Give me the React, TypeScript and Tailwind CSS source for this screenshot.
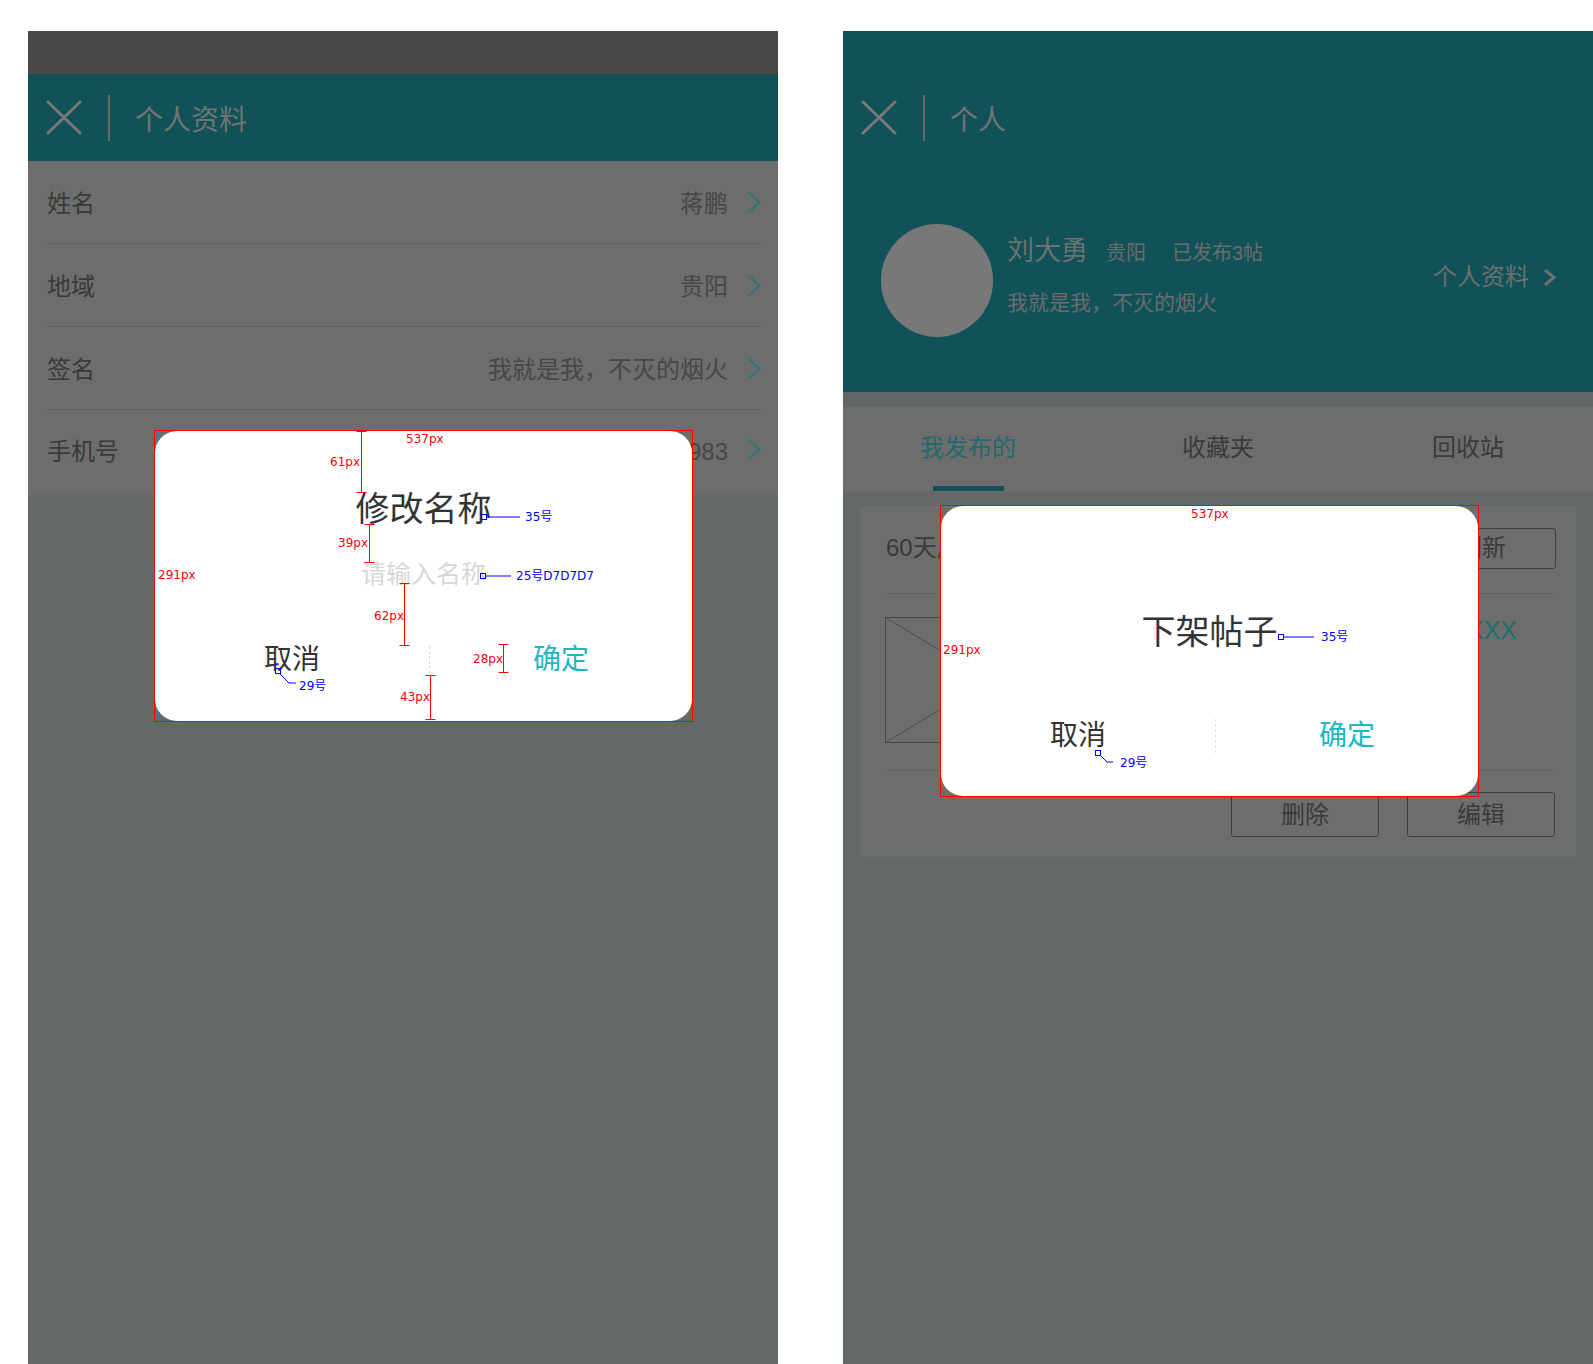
import React from "react";

function XIcon() {
  return (
    <svg width="36" height="35" viewBox="0 0 36 35" className="shrink-0">
      <path d="M2 2 L34 33 M34 2 L2 33" stroke="#787878" strokeWidth="3" strokeLinecap="round" fill="none" />
    </svg>
  );
}

function Header({ title }: { title: string }) {
  return (
    <div className="h-[87px] flex items-center">
      <div className="ml-[18px] flex">
        <XIcon />
      </div>
      <div className="ml-[26px] w-[2px] h-[46px] bg-[#676767]" />
      <div className="ml-[25px] pt-[6px] text-[28px] leading-[36px] text-[#737373]">{title}</div>
    </div>
  );
}

function TealChevron() {
  return (
    <svg width="14" height="23" viewBox="0 0 14 23" className="shrink-0">
      <polyline points="1.5,1.5 12.5,11.5 1.5,21.5" stroke="#2a7876" strokeWidth="2" fill="none" />
    </svg>
  );
}

function Row({ label, value, last }: { label: string; value: string; last?: boolean }) {
  return (
    <div className={last ? "h-[85px] flex items-center pl-[2px] pb-[6px]" : "h-[83px] flex items-center pl-[2px] border-b border-[#626262]"}>
      <div className="pt-[4px] text-[24px] leading-[32px] text-[#3a3a3a]">{label}</div>
      <div className="flex-1" />
      <div className="pt-[4px] text-[24px] leading-[32px] text-[#474747] mr-[19px]">{value}</div>
      <TealChevron />
    </div>
  );
}

function AnnoLabel({ children, className }: { children: React.ReactNode; className: string }) {
  return (
    <span className={"absolute whitespace-nowrap text-[12px] leading-[14px] [font-family:'DejaVu_Sans','Noto_Sans_CJK_SC',sans-serif] " + className}>
      {children}
    </span>
  );
}

function LeftDialog() {
  return (
    <div className="absolute left-[127px] top-[400px] w-[537px] h-[290px]">
      <div className="absolute inset-0 bg-white rounded-[22px] flex flex-col items-center">
        <div className="mt-[58px] h-[40px] text-[34px] leading-[40px] text-[#333333]">修改名称</div>
        <div className="mt-[30px] h-[30px] text-[25px] leading-[30px] text-[#d7d7d7]">请输入名称</div>
        <div className="mt-[51px] h-[40px] w-full flex items-center">
          <div className="w-[274px] text-center text-[28px] leading-[40px] text-[#333333]">取消</div>
          <div className="h-[28px] border-l border-dashed border-[#d9d9d9]" />
          <div className="flex-1 text-center text-[28px] leading-[40px] text-[#1eb6c3]">确定</div>
        </div>
      </div>
      <svg className="absolute left-0 top-0 overflow-visible pointer-events-none" width="537" height="290" viewBox="0 0 537 290">
        <rect x="-0.5" y="-0.5" width="538" height="291" stroke="#ff0000" strokeWidth="1" fill="none" />
        <g stroke="#ff0000" strokeWidth="1" fill="none">
          <path d="M206.5 0 V62 M201.5 0.5 H211.5 M201.5 61.5 H211.5" />
          <path d="M214.5 93 V132 M209.5 93.5 H219.5 M209.5 131.5 H219.5" />
          <path d="M249.5 152 V215 M244.5 152.5 H254.5 M244.5 214.5 H254.5" />
          <path d="M275.5 244 V289 M270.5 244.5 H280.5 M270.5 288.5 H280.5" />
          <path d="M348.5 213 V242 M343.5 213.5 H353.5 M343.5 241.5 H353.5" />
        </g>
        <g stroke="#0000ff" strokeWidth="1" fill="none">
          <rect x="326.5" y="83.5" width="5" height="5" />
          <path d="M331.5 86 H365" />
          <rect x="325.5" y="142.5" width="5" height="5" />
          <path d="M330.5 145 H356" />
          <rect x="120.5" y="237.5" width="5" height="5" />
          <path d="M124 242 L134 252 H141" />
        </g>
      </svg>
      <AnnoLabel className="left-[251px] top-[1px] text-[#ff0000]">537px</AnnoLabel>
      <AnnoLabel className="right-[332px] top-[24px] text-[#ff0000]">61px</AnnoLabel>
      <AnnoLabel className="right-[324px] top-[105px] text-[#ff0000]">39px</AnnoLabel>
      <AnnoLabel className="right-[288px] top-[178px] text-[#ff0000]">62px</AnnoLabel>
      <AnnoLabel className="right-[262px] top-[259px] text-[#ff0000]">43px</AnnoLabel>
      <AnnoLabel className="right-[189px] top-[221px] text-[#ff0000]">28px</AnnoLabel>
      <AnnoLabel className="left-[3px] top-[137px] text-[#ff0000]">291px</AnnoLabel>
      <AnnoLabel className="left-[370px] top-[79px] text-[#0000ff]">35号</AnnoLabel>
      <AnnoLabel className="left-[361px] top-[138px] text-[#0000ff]">25号D7D7D7</AnnoLabel>
      <AnnoLabel className="left-[144px] top-[248px] text-[#0000ff]">29号</AnnoLabel>
    </div>
  );
}

function RightDialog() {
  return (
    <div className="absolute left-[98px] top-[475px] w-[537px] h-[290px]">
      <div className="absolute inset-0 bg-white rounded-[22px] flex flex-col items-center">
        <div className="mt-[106px] h-[40px] text-[34px] leading-[40px] text-[#333333]">下架帖子</div>
        <div className="mt-[64px] h-[40px] w-full flex items-center">
          <div className="w-[274px] text-center text-[28px] leading-[40px] text-[#333333]">取消</div>
          <div className="h-[34px] border-l border-dashed border-[#e2e2e2]" />
          <div className="flex-1 text-center text-[28px] leading-[40px] text-[#1eb6c3]">确定</div>
        </div>
      </div>
      <svg className="absolute left-0 top-0 overflow-visible pointer-events-none" width="537" height="290" viewBox="0 0 537 290">
        <rect x="-0.5" y="-0.5" width="538" height="291" stroke="#ff0000" strokeWidth="1" fill="none" />
        <g stroke="#0000ff" strokeWidth="1" fill="none">
          <rect x="337.5" y="128.5" width="5" height="5" />
          <path d="M342.5 131 H373" />
          <rect x="154.5" y="244.5" width="5" height="5" />
          <path d="M159 249 L166 256 H172" />
        </g>
      </svg>
      <AnnoLabel className="left-[250px] top-[1px] text-[#ff0000]">537px</AnnoLabel>
      <AnnoLabel className="left-[2px] top-[137px] text-[#ff0000]">291px</AnnoLabel>
      <AnnoLabel className="left-[380px] top-[124px] text-[#0000ff]">35号</AnnoLabel>
      <AnnoLabel className="left-[179px] top-[250px] text-[#0000ff]">29号</AnnoLabel>
    </div>
  );
}

function LeftPanel() {
  return (
    <div className="relative w-[750px] h-[1333px] flex flex-col bg-[#646868] shrink-0">
      <div className="h-[43px] bg-[#484848]" />
      <div className="bg-[#115259]">
        <Header title="个人资料" />
      </div>
      <div className="bg-[#6d6d6d] px-[17px]">
        <Row label="姓名" value="蒋鹏" />
        <Row label="地域" value="贵阳" />
        <Row label="签名" value="我就是我，不灭的烟火" />
        <Row label="手机号" value="13885016983" last />
      </div>
      <div className="flex-1" />
      <LeftDialog />
    </div>
  );
}

function OutlineButton({ label, h }: { label: string; h: string }) {
  return (
    <div className={"w-[148px] border border-[#3d3d3d] rounded-[3px] flex items-center justify-center text-[24px] leading-[32px] text-[#3a3a3a] " + h}>
      {label}
    </div>
  );
}

function RightPanel() {
  return (
    <div className="relative w-[750px] h-[1333px] flex flex-col bg-[#646868] shrink-0">
      <div className="h-[361px] bg-[#115259] pt-[43px]">
        <Header title="个人" />
        <div className="mt-[63px] flex items-start">
          <div className="ml-[38px] w-[112px] h-[113px] rounded-full bg-[#787878]" />
          <div className="ml-[14px] mt-[9px] flex flex-col">
            <div className="flex items-baseline h-[36px]">
              <span className="text-[27px] leading-[36px] text-[#707070]">刘大勇</span>
              <span className="ml-[18px] text-[20px] leading-[28px] text-[#6c6c6c]">贵阳</span>
              <span className="ml-[26px] text-[20px] leading-[28px] text-[#6c6c6c]">已发布3帖</span>
            </div>
            <div className="mt-[20px] text-[21px] leading-[28px] text-[#6c6c6c]">我就是我，不灭的烟火</div>
          </div>
          <div className="ml-auto mr-[37px] mt-[41px] flex items-center">
            <span className="text-[24px] leading-[24px] text-[#6e6e6e]">个人资料</span>
            <svg width="13" height="19" viewBox="0 0 13 19" className="ml-[14px]">
              <polyline points="2,2 11,9.5 2,17" stroke="#707070" strokeWidth="3" fill="none" />
            </svg>
          </div>
        </div>
      </div>
      <div className="h-[15px] bg-[#616565]" />
      <div className="h-[85px] bg-[#6d6d6d] grid grid-cols-3">
        <div className="flex flex-col items-center pt-[25px]">
          <div className="h-[32px] text-[24px] leading-[32px] text-[#1e6a6e]">我发布的</div>
          <div className="mt-[22px] w-[71px] h-[5px] bg-[#11525a]" />
        </div>
        <div className="flex flex-col items-center pt-[25px]">
          <div className="h-[32px] text-[24px] leading-[32px] text-[#3a3a3a]">收藏夹</div>
        </div>
        <div className="flex flex-col items-center pt-[25px]">
          <div className="h-[32px] text-[24px] leading-[32px] text-[#3a3a3a]">回收站</div>
        </div>
      </div>
      <div className="px-[17px] pt-[14px]">
        <div className="h-[351px] bg-[#6d6d6d] pl-[25px] pr-[21px] flex flex-col">
          <div className="h-[88px] shrink-0 flex items-center border-b border-[#626262] pb-[3px]">
            <div className="ml-[1px] text-[24px] leading-[32px] text-[#3a3a3a]">60天后自动下架</div>
            <div className="ml-auto mr-[-1px]">
              <OutlineButton label="刷新" h="h-[41px]" />
            </div>
          </div>
          <div className="h-[177px] shrink-0 flex items-start border-b border-[#626262]">
            <svg width="208" height="126" viewBox="0 0 208 126" className="mt-[23px] shrink-0">
              <rect x="0.5" y="0.5" width="207" height="125" stroke="#474747" strokeWidth="1" fill="none" />
              <path d="M0.5 0.5 L207.5 125.5 M0.5 125.5 L207.5 0.5" stroke="#4d4d4d" strokeWidth="1" fill="none" />
            </svg>
            <div className="flex-1 mt-[20px] mr-[38px] text-right text-[25px] leading-[32px] text-[#1d6d70] [font-family:'Liberation_Sans',sans-serif]">
              XXXXXXXXXXXXXXX
            </div>
          </div>
          <div className="flex-1 flex items-start justify-end gap-[28px] pt-[21px]">
            <OutlineButton label="删除" h="h-[45px]" />
            <OutlineButton label="编辑" h="h-[45px]" />
          </div>
        </div>
      </div>
      <div className="flex-1" />
      <RightDialog />
    </div>
  );
}

export default function App() {
  return (
    <div className="w-[1593px] h-[1364px] bg-white overflow-hidden pt-[31px] pl-[28px] flex gap-[65px] [font-family:'Liberation_Sans','Noto_Sans_CJK_SC',sans-serif]">
      <LeftPanel />
      <RightPanel />
    </div>
  );
}
